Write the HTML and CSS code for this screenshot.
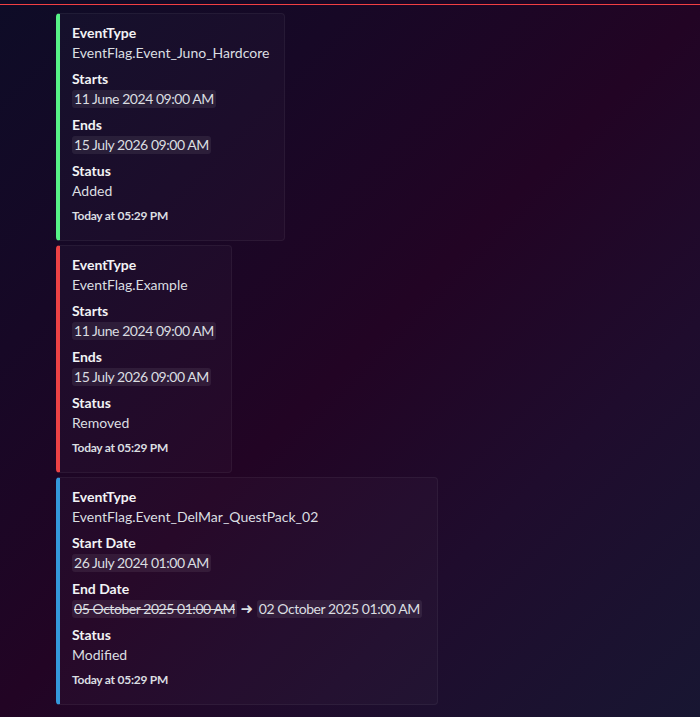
FILE: index.html
```html
<!DOCTYPE html>
<html lang="en">
<head>
<meta charset="utf-8">
<title>Event flags</title>
<link rel="stylesheet" href="styles.css">
</head>
<body>
<div class="divider"></div>
<main class="embeds">
  <article class="embed green">
    <div class="field"><div class="name">EventType</div><div class="value">EventFlag.Event_Juno_Hardcore</div></div>
    <div class="field"><div class="name">Starts</div><div class="value"><span class="ts">11 June 2024 09:00 AM</span></div></div>
    <div class="field"><div class="name">Ends</div><div class="value"><span class="ts">15 July 2026 09:00 AM</span></div></div>
    <div class="field"><div class="name">Status</div><div class="value">Added</div></div>
    <div class="footer">Today at 05:29 PM</div>
  </article>
  <article class="embed red">
    <div class="field"><div class="name">EventType</div><div class="value">EventFlag.Example</div></div>
    <div class="field"><div class="name">Starts</div><div class="value"><span class="ts">11 June 2024 09:00 AM</span></div></div>
    <div class="field"><div class="name">Ends</div><div class="value"><span class="ts">15 July 2026 09:00 AM</span></div></div>
    <div class="field"><div class="name">Status</div><div class="value">Removed</div></div>
    <div class="footer">Today at 05:29 PM</div>
  </article>
  <article class="embed blue">
    <div class="field"><div class="name">EventType</div><div class="value">EventFlag.Event_DelMar_QuestPack_02</div></div>
    <div class="field"><div class="name">Start Date</div><div class="value"><span class="ts">26 July 2024 01:00 AM</span></div></div>
    <div class="field"><div class="name">End Date</div><div class="value"><span class="ts strike">05 October 2025 01:00 AM</span> <span class="arrow">➜</span> <span class="ts">02 October 2025 01:00 AM</span></div></div>
    <div class="field"><div class="name">Status</div><div class="value">Modified</div></div>
    <div class="footer">Today at 05:29 PM</div>
  </article>
</main>
</body>
</html>
```

FILE: styles.css
```css
* { box-sizing: border-box; }
html, body { margin: 0; }
body {
  min-height: 717px;
  background: linear-gradient(135deg, #0e0c27 0%, #170826 25%, #220424 50%, #1f0c2d 72%, #181632 100%);
  font-family: "Lato", "Noto Sans", sans-serif;
  color: #dbdee1;
}
.divider {
  height: 1px;
  margin-top: 4px;
  background: #f23f43;
}
.embeds {
  display: flex;
  flex-direction: column;
  align-items: flex-start;
  gap: 4px;
  padding: 8px 0 0 56px;
}
.embed {
  display: flex;
  flex-direction: column;
  gap: 8px;
  padding: 10px 15px 16px 12px;
  border: 1px solid rgba(255, 255, 255, 0.05);
  border-left: 4px solid;
  border-radius: 4px;
  background: rgba(255, 255, 255, 0.025);
}
.embed.green { border-left-color: #57f287; }
.embed.red { border-left-color: #ed4245; }
.embed.blue { border-left-color: #3498db; }
.field { display: flex; flex-direction: column; }
.name {
  font-size: 14px;
  line-height: 18px;
  font-weight: 700;
  color: #f2f3f5;
  margin-bottom: 2px;
}
.value {
  font-size: 14px;
  line-height: 18px;
  height: 18px;
  white-space: nowrap;
}
.ts {
  display: inline-block;
  vertical-align: top;
  height: 18px;
  padding: 0 2px;
  border-radius: 3px;
  letter-spacing: -0.45px;
  background: rgba(255, 255, 255, 0.07);
}
.strike { text-decoration: line-through; }
.arrow {
  display: inline-block;
  vertical-align: top;
  height: 18px;
  line-height: 18px;
  font-family: "DejaVu Sans", sans-serif;
  font-weight: 700;
  font-size: 15px;
}
.footer {
  font-size: 12px;
  line-height: 16px;
  font-weight: 700;
  letter-spacing: -0.25px;
  color: #dbdee1;
}
```
